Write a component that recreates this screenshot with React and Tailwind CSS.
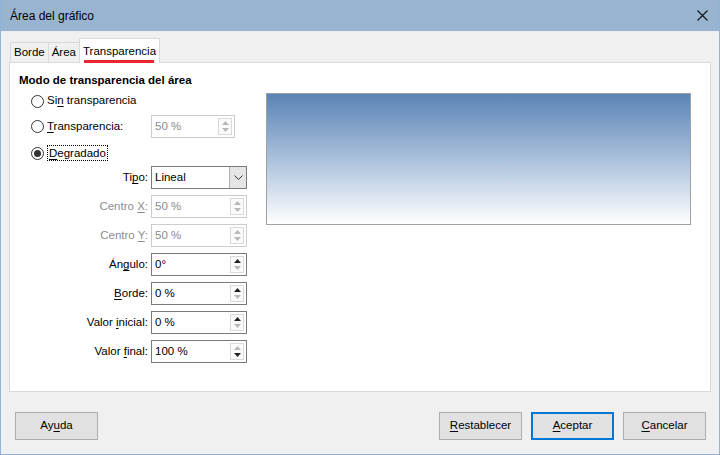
import React from 'react';

const Arrow = ({ dir, dim }) => (
  <svg width="7" height="4" viewBox="0 0 7 4" className="block">
    <path
      d={dir === 'up' ? 'M0 4 L3.5 0 L7 4 Z' : 'M0 0 L3.5 4 L7 0 Z'}
      fill={dim ? '#b8b8b8' : '#222'}
    />
  </svg>
);

const SpinBox = ({ value, disabled, upDim, downDim, width = 'w-[96px]' }) => (
  <div
    className={`flex h-[23px] ${width} items-stretch border bg-white ${
      disabled ? 'border-[#cccccc] text-[#8a8a8a]' : 'border-[#7a7a7a] text-black'
    }`}
  >
    <span className="flex-1 pl-[3px] leading-[21px]">{value}</span>
    <div className="my-[2px] mr-[2px] flex w-[14px] flex-col border border-[#d9d9d9] bg-[#fbfbfb]">
      <div className="flex flex-1 items-center justify-center">
        <Arrow dir="up" dim={disabled || upDim} />
      </div>
      <div className="flex flex-1 items-center justify-center">
        <Arrow dir="down" dim={disabled || downDim} />
      </div>
    </div>
  </div>
);

const Radio = ({ checked }) => (
  <span className="flex h-[13px] w-[13px] shrink-0 items-center justify-center rounded-full border border-[#333] bg-white">
    {checked && <span className="h-[7px] w-[7px] rounded-full bg-[#333]" />}
  </span>
);

const Label = ({ children, disabled }) => (
  <span className={`text-right leading-[23px] ${disabled ? 'text-[#8d8d8d]' : 'text-black'}`}>
    {children}
  </span>
);

const Btn = ({ children, primary }) => (
  <button
    className={`h-[28px] w-[83px] bg-[#e1e1e1] text-center text-[11.5px] ${
      primary ? 'border-2 border-[#0078d7]' : 'border border-[#adadad]'
    }`}
  >
    {children}
  </button>
);

export default function App() {
  return (
    <div className="flex h-[455px] w-[720px] flex-col border-x border-b border-[#8fb1da] bg-[#f0f0f0] font-['Liberation_Sans',Arial,sans-serif] text-[11.5px] text-black">
      {/* title bar */}
      <div className="flex h-[31px] shrink-0 items-center justify-between bg-[#99b4d1] pl-[9px] pr-[11px] text-[12px]">
        <span>Área del gráfico</span>
        <svg width="11" height="11" viewBox="0 0 11 11">
          <path d="M0.5 0.5 L10.5 10.5 M10.5 0.5 L0.5 10.5" stroke="#111" strokeWidth="1.1" />
        </svg>
      </div>

      <div className="flex flex-1 flex-col px-[8px] pt-[7px]">
        {/* tabs */}
        <div className="flex h-[24px] items-end pl-px">
          <div className="flex h-[20px] items-center border-l border-t border-[#d9d9d9] px-[3px]">Borde</div>
          <div className="flex h-[20px] items-center border-l border-t border-[#d9d9d9] px-[3px]">Área</div>
          <div className="relative z-10 -mb-px flex h-[25px] items-center border-x border-t border-[#d9d9d9] bg-white px-[3px] pt-[2px]">
            Transparencia
            <span className="absolute bottom-0 left-[4px] right-[5px] h-[3px] bg-[#e8262d]" />
          </div>
        </div>

        {/* panel */}
        <div className="h-[330px] border border-[#d9d9d9] bg-white pl-[9px] pt-[9px]">
          <div className="font-bold leading-[16px]">Modo de transparencia del área</div>
          <div className="mt-[4px] flex">
            <div className="w-[228px]">
              <div className="flex h-[18px] items-center gap-[3px] pl-[12px]">
                <Radio />
                <span>
                  Si<u className="underline-offset-2">n</u> transparencia
                </span>
              </div>
              <div className="mt-[5px] flex h-[23px] items-center pl-[12px]">
                <Radio />
                <span className="ml-[3px] w-[104px]">
                  <u className="underline-offset-2">T</u>ransparencia:
                </span>
                <SpinBox value="50 %" disabled width="w-[84px]" />
              </div>
              <div className="mt-[6px] flex h-[18px] items-center gap-[3px] pl-[12px]">
                <Radio checked />
                <span className="border border-dotted border-black px-px leading-[14px]">
                  <u className="underline-offset-2">D</u>egradado
                </span>
              </div>

              <div className="mt-[4px] grid grid-cols-[129px_96px] gap-x-[3px] gap-y-[6px]">
                <Label>
                  Ti<u className="underline-offset-2">p</u>o:
                </Label>
                <div className="flex h-[23px] w-[96px] items-stretch border border-[#7a7a7a] bg-white">
                  <span className="flex-1 pl-[3px] leading-[21px]">Lineal</span>
                  <div className="flex w-[17px] items-center justify-center border-l border-[#adadad] bg-[#e5e5e5]">
                    <svg width="9" height="5" viewBox="0 0 9 5">
                      <path d="M0.5 0.5 L4.5 4.5 L8.5 0.5" stroke="#333" fill="none" strokeWidth="1" />
                    </svg>
                  </div>
                </div>

                <Label disabled>
                  Centro <u className="underline-offset-2">X</u>:
                </Label>
                <SpinBox value="50 %" disabled />

                <Label disabled>
                  Centro <u className="underline-offset-2">Y</u>:
                </Label>
                <SpinBox value="50 %" disabled />

                <Label>
                  Án<u className="underline-offset-2">g</u>ulo:
                </Label>
                <SpinBox value="0°" downDim />

                <Label>
                  <u className="underline-offset-2">B</u>orde:
                </Label>
                <SpinBox value="0 %" downDim />

                <Label>
                  Valor <u className="underline-offset-2">i</u>nicial:
                </Label>
                <SpinBox value="0 %" downDim />

                <Label>
                  Valor <u className="underline-offset-2">f</u>inal:
                </Label>
                <SpinBox value="100 %" upDim />
              </div>
            </div>

            <div className="ml-[19px] mt-px h-[132px] w-[425px] border border-[#a0a0a0] bg-linear-to-b from-[#5a84b6] to-white" />
          </div>
        </div>

        {/* buttons */}
        <div className="mt-[20px] flex pl-[6px] pr-[5px]">
          <Btn>
            Ay<u className="underline-offset-2">u</u>da
          </Btn>
          <div className="ml-auto flex gap-[9px]">
            <Btn>
              <u className="underline-offset-2">R</u>establecer
            </Btn>
            <Btn primary>
              <u className="underline-offset-2">A</u>ceptar
            </Btn>
            <Btn>
              <u className="underline-offset-2">C</u>ancelar
            </Btn>
          </div>
        </div>
      </div>
    </div>
  );
}
